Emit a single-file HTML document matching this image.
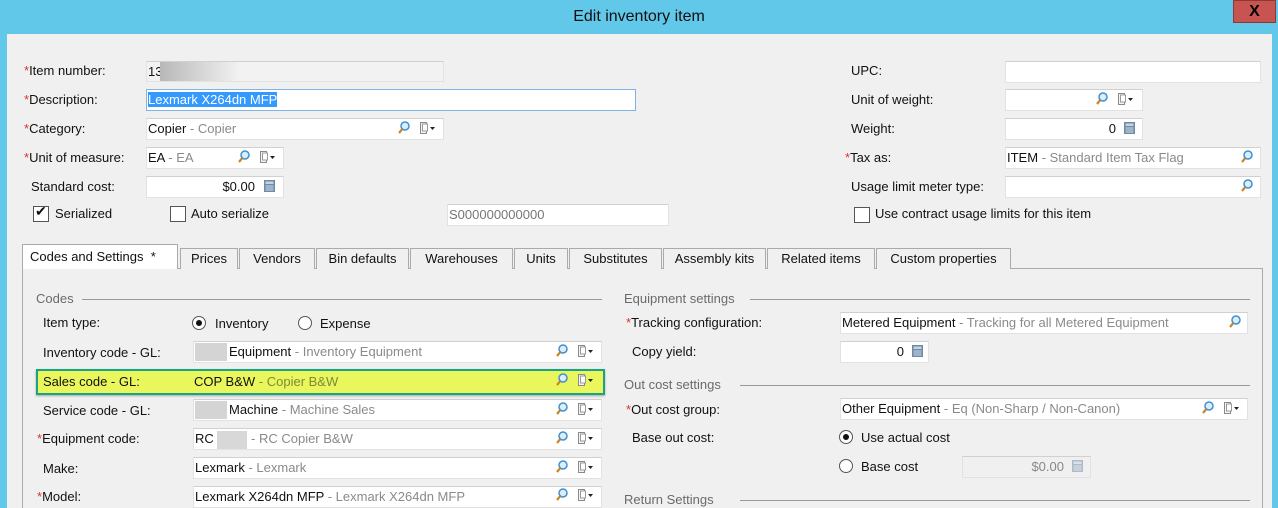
<!DOCTYPE html>
<html><head><meta charset="utf-8"><style>
*{box-sizing:border-box;margin:0;padding:0}
body{width:1278px;height:508px;overflow:hidden;background:#62c8e9;font-family:"Liberation Sans",sans-serif;font-size:13px;color:#111;position:relative}
.a{position:absolute;white-space:nowrap}
.title{left:0;top:0;width:1278px;text-align:center;top:8px;font-size:16px;color:#111}
.close{left:1233px;top:0;width:43px;height:23px;background:#c75450;border:1px solid #8a3a36;color:#000;font-weight:bold;font-size:16px;text-align:center;line-height:21px}
.body{left:7px;top:34px;width:1265px;height:474px;background:#f0f0f0}
.lbl{line-height:16px}
.r{color:#e03030}
.in{background:#fff;border:1px solid #e2e2e2;border-top-color:#d0d0d0;height:22px;line-height:20px;padding-left:1px;overflow:hidden}
.g{color:#8a8a8a}
.cb{width:16px;height:16px;border:1px solid #555;background:#fff}
.rad{width:14px;height:14px;border:1px solid #555;border-radius:50%;background:#fff}
.rad.on::after{content:"";position:absolute;left:3px;top:3px;width:6px;height:6px;border-radius:50%;background:#111}
.tab{top:248px;height:21px;border:1px solid #aaa;border-bottom:none;background:#f0f0f0;text-align:center;line-height:20px}
.leg{color:#6a6a6a}
.line{height:1px;background:#999}
.gr{background:#d4d4d4}
</style></head><body>
<div class="a title">Edit inventory item</div>
<div class="a close">X</div>
<div class="a body"></div>

<!-- top left -->
<div class="a lbl" style="left:24px;top:63px"><span class="r">*</span>Item number:</div>
<div class="a in" style="left:146px;top:61px;width:298px;height:21px;background:#f2f2f2">13</div>
<div class="a" style="left:160px;top:62px;width:80px;height:19px;background:linear-gradient(90deg,#b8b8b8,#f2f2f2)"></div>
<div class="a lbl" style="left:24px;top:92px"><span class="r">*</span>Description:</div>
<div class="a in" style="left:146px;top:89px;width:490px;border-color:#7eb4ea"><span style="background:#3399ff;color:#fff">Lexmark X264dn MFP</span></div>
<div class="a lbl" style="left:24px;top:121px"><span class="r">*</span>Category:</div>
<div class="a in" style="left:146px;top:118px;width:298px">Copier <span class="g">- Copier</span></div>
<div class="a lbl" style="left:24px;top:150px"><span class="r">*</span>Unit of measure:</div>
<div class="a in" style="left:146px;top:147px;width:138px">EA <span class="g">- EA</span></div>
<div class="a lbl" style="left:31px;top:179px">Standard cost:</div>
<div class="a in" style="left:146px;top:176px;width:138px;text-align:right;padding-right:28px">$0.00</div>
<div class="a cb" style="left:33px;top:206px"></div><div class="a" style="left:35px;top:203px;font-size:14px">✔</div>
<div class="a lbl" style="left:55px;top:206px">Serialized</div>
<div class="a cb" style="left:170px;top:206px"></div>
<div class="a lbl" style="left:191px;top:206px">Auto serialize</div>
<div class="a in" style="left:447px;top:204px;width:222px;color:#777">S000000000000</div>

<!-- top right -->
<div class="a lbl" style="left:851px;top:63px">UPC:</div>
<div class="a in" style="left:1005px;top:61px;width:256px"></div>
<div class="a lbl" style="left:851px;top:92px">Unit of weight:</div>
<div class="a in" style="left:1005px;top:89px;width:138px"></div>
<div class="a lbl" style="left:851px;top:121px">Weight:</div>
<div class="a in" style="left:1005px;top:118px;width:138px;text-align:right;padding-right:26px">0</div>
<div class="a lbl" style="left:845px;top:150px"><span class="r">*</span>Tax as:</div>
<div class="a in" style="left:1005px;top:147px;width:256px">ITEM <span class="g">- Standard Item Tax Flag</span></div>
<div class="a lbl" style="left:851px;top:179px">Usage limit meter type:</div>
<div class="a in" style="left:1005px;top:176px;width:256px"></div>
<div class="a cb" style="left:854px;top:207px"></div>
<div class="a lbl" style="left:875px;top:206px">Use contract usage limits for this item</div>

<!-- tabs -->
<div class="a" style="left:22px;top:268px;width:1241px;height:240px;border:1px solid #aaa;border-bottom:none;background:#f0f0f0"></div>
<div class="a tab" style="left:22px;top:244px;height:25px;width:156px;background:#fff;text-align:left;padding-left:7px;line-height:24px">Codes and Settings&nbsp; *</div>
<div class="a tab" style="left:180px;width:58px">Prices</div>
<div class="a tab" style="left:239px;width:76px">Vendors</div>
<div class="a tab" style="left:316px;width:93px">Bin defaults</div>
<div class="a tab" style="left:410px;width:103px">Warehouses</div>
<div class="a tab" style="left:514px;width:54px">Units</div>
<div class="a tab" style="left:569px;width:93px">Substitutes</div>
<div class="a tab" style="left:663px;width:103px">Assembly kits</div>
<div class="a tab" style="left:767px;width:108px">Related items</div>
<div class="a tab" style="left:876px;width:135px">Custom properties</div>

<!-- codes -->
<div class="a leg" style="left:36px;top:291px">Codes</div>
<div class="a line" style="left:82px;top:299px;width:520px"></div>
<div class="a lbl" style="left:43px;top:315px">Item type:</div>
<div class="a rad on" style="left:192px;top:316px"></div><div class="a lbl" style="left:215px;top:316px">Inventory</div>
<div class="a rad" style="left:298px;top:316px"></div><div class="a lbl" style="left:320px;top:316px">Expense</div>

<div class="a lbl" style="left:43px;top:345px">Inventory code - GL:</div>
<div class="a in" style="left:193px;top:341px;width:409px;padding-left:35px">Equipment <span class="g">- Inventory Equipment</span></div>
<div class="a gr" style="left:195px;top:343px;width:32px;height:18px"></div>

<div class="a" style="left:36px;top:369px;width:569px;height:26px;border:2px solid #17a384;background:#e9f75c;box-shadow:0 1px 2px rgba(0,0,0,.3)"></div>
<div class="a lbl" style="left:43px;top:374px">Sales code - GL:</div>
<div class="a" style="left:194px;top:374px">COP B&amp;W <span style="color:#7c8a3a">- Copier B&amp;W</span></div>

<div class="a lbl" style="left:43px;top:403px">Service code - GL:</div>
<div class="a in" style="left:193px;top:399px;width:409px;padding-left:35px">Machine <span class="g">- Machine Sales</span></div>
<div class="a gr" style="left:195px;top:401px;width:32px;height:18px"></div>
<div class="a lbl" style="left:37px;top:431px"><span class="r">*</span>Equipment code:</div>
<div class="a in" style="left:193px;top:428px;width:409px">RC <span style="display:inline-block;width:30px;height:18px;background:#d8d8d8;vertical-align:middle"></span> <span class="g">- RC Copier B&amp;W</span></div>
<div class="a lbl" style="left:43px;top:461px">Make:</div>
<div class="a in" style="left:193px;top:457px;width:409px">Lexmark <span class="g">- Lexmark</span></div>
<div class="a lbl" style="left:37px;top:489px"><span class="r">*</span>Model:</div>
<div class="a in" style="left:193px;top:486px;width:409px">Lexmark X264dn MFP <span class="g">- Lexmark X264dn MFP</span></div>

<!-- right panel -->
<div class="a leg" style="left:624px;top:291px">Equipment settings</div>
<div class="a line" style="left:750px;top:299px;width:500px"></div>
<div class="a lbl" style="left:626px;top:315px"><span class="r">*</span>Tracking configuration:</div>
<div class="a in" style="left:840px;top:312px;width:408px">Metered Equipment <span class="g">- Tracking for all Metered Equipment</span></div>
<div class="a lbl" style="left:632px;top:344px">Copy yield:</div>
<div class="a in" style="left:840px;top:341px;width:89px;text-align:right;padding-right:24px">0</div>
<div class="a leg" style="left:624px;top:377px">Out cost settings</div>
<div class="a line" style="left:740px;top:385px;width:510px"></div>
<div class="a lbl" style="left:626px;top:402px"><span class="r">*</span>Out cost group:</div>
<div class="a in" style="left:840px;top:398px;width:408px">Other Equipment <span class="g">- Eq (Non-Sharp / Non-Canon)</span></div>
<div class="a lbl" style="left:632px;top:430px">Base out cost:</div>
<div class="a rad on" style="left:839px;top:430px"></div><div class="a lbl" style="left:861px;top:430px">Use actual cost</div>
<div class="a rad" style="left:839px;top:459px"></div><div class="a lbl" style="left:861px;top:459px">Base cost</div>
<div class="a in" style="left:962px;top:456px;width:129px;background:#f0f0f0;color:#888;text-align:right;padding-right:26px">$0.00</div>
<div class="a leg" style="left:624px;top:492px">Return Settings</div>
<div class="a line" style="left:740px;top:500px;width:510px"></div>

<!-- icons -->
<svg class="a" style="left:0;top:0" width="1278" height="508">
<defs>
<g id="mg"><circle cx="7" cy="5" r="4" fill="#dbeefc" stroke="#3f8fd0" stroke-width="1.5"/><line x1="4.3" y1="8" x2="1" y2="12" stroke="#c8862b" stroke-width="2.2"/></g>
<g id="fl"><rect x="0.5" y="0.5" width="6" height="11" fill="#f4f4f4" stroke="#8a8a8a"/><rect x="2.5" y="2" width="5" height="7" fill="#fff" stroke="#999"/><path d="M10 5h5l-2.5 3z" fill="#222"/></g>
<g id="calc"><rect x="0" y="0" width="11" height="12" fill="#6f8aa5"/><rect x="1.5" y="1.5" width="8" height="2.5" fill="#c5d4e2"/><rect x="1.5" y="5" width="8" height="6" fill="#9fb4c8"/></g>
</defs>
<use href="#mg" x="398" y="121"/><use href="#fl" x="420" y="122"/>
<use href="#mg" x="238" y="150"/><use href="#fl" x="260" y="151"/>
<use href="#calc" x="264" y="180"/>
<use href="#mg" x="1096" y="92"/><use href="#fl" x="1118" y="93"/>
<use href="#calc" x="1124" y="122"/>
<use href="#mg" x="1241" y="150"/>
<use href="#mg" x="1241" y="179"/>
<use href="#mg" x="556" y="344"/><use href="#fl" x="578" y="345"/>
<use href="#mg" x="556" y="373"/><use href="#fl" x="578" y="374"/>
<use href="#mg" x="556" y="402"/><use href="#fl" x="578" y="403"/>
<use href="#mg" x="556" y="431"/><use href="#fl" x="578" y="432"/>
<use href="#mg" x="556" y="460"/><use href="#fl" x="578" y="461"/>
<use href="#mg" x="556" y="488"/><use href="#fl" x="578" y="489"/>
<use href="#mg" x="1229" y="315"/>
<use href="#calc" x="912" y="345"/>
<use href="#mg" x="1202" y="401"/><use href="#fl" x="1224" y="402"/>
<use href="#calc" x="1072" y="460" opacity=".5"/>
</svg>
</body></html>
